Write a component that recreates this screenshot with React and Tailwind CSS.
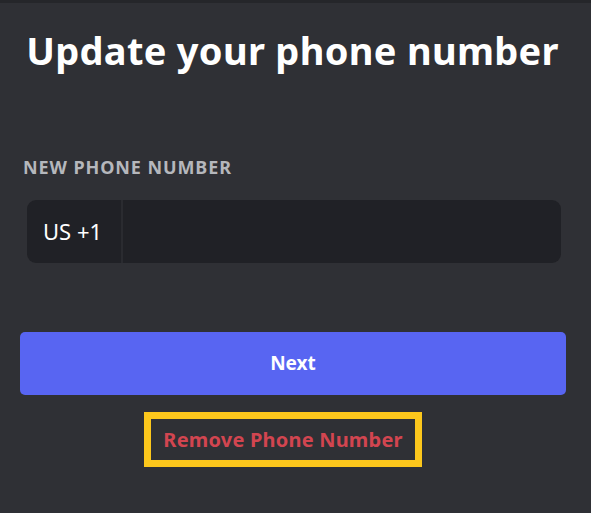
export default function App() {
  return (
    <div className="min-h-screen w-full bg-[#2f3035] font-['Noto_Sans',sans-serif] border-t-[3px] border-[#25262a]">
      <div className="pt-[22px] px-[20px]">
        <h1 className="text-center text-[38px] leading-[50px] font-bold text-white tracking-[0.3px] pr-[6px]">
          Update your phone number
        </h1>

        <div className="mt-[80px] pl-[3px] text-[18px] leading-[24px] font-bold text-[#b5b7bc] tracking-[0.9px]">
          NEW PHONE NUMBER
        </div>

        <div className="mt-[21px] ml-[7px] mr-[10px] h-[63px] flex rounded-[9px] bg-[#202126] overflow-hidden">
          <div className="w-[96px] flex items-center pl-[16px] text-[22px] text-white border-r-2 border-[#2a2b30]">
            US +1
          </div>
          <input className="flex-1 bg-transparent outline-none text-white px-3" />
        </div>

        <button className="mt-[69px] w-[546px] h-[63px] rounded-[5px] bg-[#5865f2] text-white text-[19px] font-bold">
          Next
        </button>

        <div className="mt-[17px] flex">
          <div className="ml-[124px] border-[7px] border-[#fcc71c] w-[278px] h-[55px] flex items-center justify-center">
            <span className="text-[20px] font-bold text-[#d24550] tracking-[0.2px]">Remove Phone Number</span>
          </div>
        </div>
      </div>
    </div>
  );
}
